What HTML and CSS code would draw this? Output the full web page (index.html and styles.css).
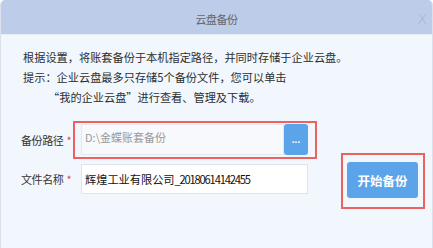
FILE: index.html
```html
<!DOCTYPE html>
<html lang="zh-CN">
<head>
<meta charset="utf-8">
<title>云盘备份</title>
<link rel="stylesheet" href="styles.css">
</head>
<body>
<div class="window">
  <div class="titlebar">
    <span></span>
    <span class="title">云盘备份</span>
    <span class="close">X</span>
  </div>
  <div class="content">
    <div class="intro">
      <p>根据设置，将账套备份于本机指定路径，并同时存储于企业云盘。</p>
      <p>提示：企业云盘最多只存储5个备份文件，您可以单击</p>
      <p class="indent">“我的企业云盘”进行查看、管理及下载。</p>
    </div>
    <div class="main">
      <div class="form">
        <div class="row">
          <label class="label">备份路径<span class="req">*</span></label>
          <div class="hl path-box">
            <div class="input path-input placeholder">D:\金蝶账套备份</div>
            <button class="browse">...</button>
          </div>
        </div>
        <div class="row">
          <label class="label">文件名称<span class="req">*</span></label>
          <div class="input name-input">辉煌工业有限公司<span class="num">_20180614142455</span></div>
        </div>
      </div>
      <div class="hl start-box">
        <button class="start">开始备份</button>
      </div>
    </div>
  </div>
</div>
</body>
</html>
```

FILE: styles.css
```css
* { box-sizing: border-box; }
html, body { margin: 0; padding: 0; background: #ffffff; }
body {
  font-family: "Noto Sans CJK SC", "Noto Sans", sans-serif;
  font-size: 11px;
  color: #333;
}
.window {
  width: 433px;
  height: 248px;
  background: #f2f7fd;
  border-left: 1px solid #d9e1ec;
  border-right: 1px solid #d9e1ec;
  border-radius: 5px 5px 0 0;
  overflow: hidden;
}
.titlebar {
  height: 35px;
  background: #bdcce9;
  border-bottom: 1px solid #e4ecf7;
  display: grid;
  grid-template-columns: 1fr auto 1fr;
  align-items: center;
}
.title {
  color: #62666f;
  font-size: 11px;
  letter-spacing: -0.5px;
  padding-top: 3px;
}
.close {
  justify-self: end;
  margin-right: 5px;
  color: #a9b3c6;
  font-family: "DejaVu Sans", sans-serif;
  font-weight: 300;
  font-size: 14px;
  padding-top: 3px;
}
.content {
  padding: 12px 0 0 22px;
}
.intro p {
  margin: 0;
  line-height: 20px;
  height: 20px;
  color: #2e2e2e;
  font-size: 11.2px;
}
.intro .indent { padding-left: 25px; }
.main {
  display: flex;
  align-items: flex-start;
  margin-top: 14px;
  margin-left: -2px;
}
.form {
  display: flex;
  flex-direction: column;
  gap: 5px;
}
.row {
  display: flex;
  align-items: center;
}
.label {
  width: 52px;
  flex: none;
  white-space: nowrap;
  color: #333;
  letter-spacing: -0.4px;
}
.req { color: #e24a4a; margin-left: 3px; }
.hl {
  border: 2px solid #ee6161;
}
.path-box {
  display: flex;
  padding: 1px 7px 2px 6px;
  width: 244px;
  height: 38px;
}
.input {
  background: #fff;
  border: 1px solid #dfe4ec;
  padding: 3px 3px;
  color: #222;
}
.path-input {
  flex: 1;
  height: 31px;
  background: #f7f9fc;
  border-color: #e3e8ef;
  line-height: 18px;
}
.placeholder { color: #9a9a9a; }
.browse {
  width: 24px;
  height: 31px;
  border: none;
  border-radius: 3px;
  background: #5ca4e9;
  color: #fff;
  font-weight: bold;
  font-size: 10px;
  padding: 0;
  line-height: 1;
}
.name-input {
  margin-left: 8px;
  width: 227px;
  height: 30px;
  line-height: 22px;
  color: #111;
  font-size: 11.2px;
}
.num { letter-spacing: -1.2px; }
.start-box {
  margin-left: 24px;
  margin-top: 32px;
  width: 84px;
  height: 56px;
  padding: 7px 5px 9px 4px;
}
.start {
  width: 71px;
  height: 36px;
  border: none;
  border-radius: 3px;
  background: #5ca4e9;
  color: #fff;
  font-family: "Noto Sans CJK SC", sans-serif;
  font-weight: bold;
  font-size: 12.5px;
  padding: 0;
}
```
